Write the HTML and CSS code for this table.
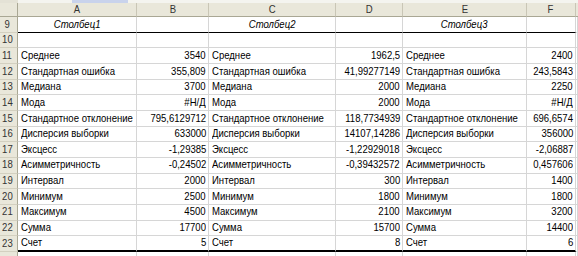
FILE: index.html
```html
<!DOCTYPE html>
<html lang="ru">
<head>
<meta charset="utf-8">
<link rel="stylesheet" href="styles.css">
</head>
<body>
<div class="sheet">
  <div class="strip"></div>

  <div class="corner"></div>
  <div class="ch"><span>A</span></div>
  <div class="ch"><span>B</span></div>
  <div class="ch"><span>C</span></div>
  <div class="ch"><span>D</span></div>
  <div class="ch"><span>E</span></div>
  <div class="ch"><span>F</span></div>
  <div class="ch ch-last"></div>

  <div class="rh"><span>9</span></div>
  <div class="c head it"><span>Столбец1</span></div>
  <div class="c head"></div>
  <div class="c head it"><span>Столбец2</span></div>
  <div class="c head"></div>
  <div class="c head it"><span>Столбец3</span></div>
  <div class="c head"></div>
  <div class="c"></div>

  <div class="rh"><span>10</span></div>
  <div class="c"></div><div class="c"></div><div class="c"></div><div class="c"></div><div class="c"></div><div class="c"></div><div class="c"></div>

  <div class="rh"><span>11</span></div>
  <div class="c t"><span>Среднее</span></div><div class="c n"><span>3540</span></div>
  <div class="c t"><span>Среднее</span></div><div class="c n"><span>1962,5</span></div>
  <div class="c t"><span>Среднее</span></div><div class="c n"><span>2400</span></div>
  <div class="c"></div>

  <div class="rh"><span>12</span></div>
  <div class="c t"><span>Стандартная ошибка</span></div><div class="c n"><span>355,809</span></div>
  <div class="c t"><span>Стандартная ошибка</span></div><div class="c n"><span>41,99277149</span></div>
  <div class="c t"><span>Стандартная ошибка</span></div><div class="c n"><span>243,5843</span></div>
  <div class="c"></div>

  <div class="rh"><span>13</span></div>
  <div class="c t"><span>Медиана</span></div><div class="c n"><span>3700</span></div>
  <div class="c t"><span>Медиана</span></div><div class="c n"><span>2000</span></div>
  <div class="c t"><span>Медиана</span></div><div class="c n"><span>2250</span></div>
  <div class="c"></div>

  <div class="rh"><span>14</span></div>
  <div class="c t"><span>Мода</span></div><div class="c n"><span>#Н/Д</span></div>
  <div class="c t"><span>Мода</span></div><div class="c n"><span>2000</span></div>
  <div class="c t"><span>Мода</span></div><div class="c n"><span>#Н/Д</span></div>
  <div class="c"></div>

  <div class="rh"><span>15</span></div>
  <div class="c t"><span>Стандартное отклонение</span></div><div class="c n"><span>795,6129712</span></div>
  <div class="c t"><span>Стандартное отклонение</span></div><div class="c n"><span>118,7734939</span></div>
  <div class="c t"><span>Стандартное отклонение</span></div><div class="c n"><span>696,6574</span></div>
  <div class="c"></div>

  <div class="rh"><span>16</span></div>
  <div class="c t"><span>Дисперсия выборки</span></div><div class="c n"><span>633000</span></div>
  <div class="c t"><span>Дисперсия выборки</span></div><div class="c n"><span>14107,14286</span></div>
  <div class="c t"><span>Дисперсия выборки</span></div><div class="c n"><span>356000</span></div>
  <div class="c"></div>

  <div class="rh"><span>17</span></div>
  <div class="c t"><span>Эксцесс</span></div><div class="c n"><span>-1,29385</span></div>
  <div class="c t"><span>Эксцесс</span></div><div class="c n"><span>-1,22929018</span></div>
  <div class="c t"><span>Эксцесс</span></div><div class="c n"><span>-2,06887</span></div>
  <div class="c"></div>

  <div class="rh"><span>18</span></div>
  <div class="c t"><span>Асимметричность</span></div><div class="c n"><span>-0,24502</span></div>
  <div class="c t"><span>Асимметричность</span></div><div class="c n"><span>-0,39432572</span></div>
  <div class="c t"><span>Асимметричность</span></div><div class="c n"><span>0,457606</span></div>
  <div class="c"></div>

  <div class="rh"><span>19</span></div>
  <div class="c t"><span>Интервал</span></div><div class="c n"><span>2000</span></div>
  <div class="c t"><span>Интервал</span></div><div class="c n"><span>300</span></div>
  <div class="c t"><span>Интервал</span></div><div class="c n"><span>1400</span></div>
  <div class="c"></div>

  <div class="rh"><span>20</span></div>
  <div class="c t"><span>Минимум</span></div><div class="c n"><span>2500</span></div>
  <div class="c t"><span>Минимум</span></div><div class="c n"><span>1800</span></div>
  <div class="c t"><span>Минимум</span></div><div class="c n"><span>1800</span></div>
  <div class="c"></div>

  <div class="rh"><span>21</span></div>
  <div class="c t"><span>Максимум</span></div><div class="c n"><span>4500</span></div>
  <div class="c t"><span>Максимум</span></div><div class="c n"><span>2100</span></div>
  <div class="c t"><span>Максимум</span></div><div class="c n"><span>3200</span></div>
  <div class="c"></div>

  <div class="rh"><span>22</span></div>
  <div class="c t"><span>Сумма</span></div><div class="c n"><span>17700</span></div>
  <div class="c t"><span>Сумма</span></div><div class="c n"><span>15700</span></div>
  <div class="c t"><span>Сумма</span></div><div class="c n"><span>14400</span></div>
  <div class="c"></div>

  <div class="rh"><span>23</span></div>
  <div class="c t foot"><span>Счет</span></div><div class="c n foot"><span>5</span></div>
  <div class="c t foot"><span>Счет</span></div><div class="c n foot"><span>8</span></div>
  <div class="c t foot"><span>Счет</span></div><div class="c n foot"><span>6</span></div>
  <div class="c"></div>

  <div class="rh"></div>
  <div class="c"></div><div class="c"></div><div class="c"></div><div class="c"></div><div class="c"></div><div class="c"></div><div class="c"></div>
</div>
</body>
</html>
```

FILE: styles.css
```css
html, body {
  margin: 0;
  padding: 0;
  background: #ffffff;
  overflow: hidden;
}

.sheet {
  width: 578px;
  height: 256px;
  overflow: hidden;
  display: grid;
  grid-template-columns: 18px 119px 72px 127px 67px 124px 49px 1fr;
  grid-template-rows: 3px 14px repeat(16, 15.67px);
  font-family: "Liberation Sans", Arial, sans-serif;
  font-size: 11.5px;
  color: #000;
}

.sheet > div {
  box-sizing: border-box;
  overflow: hidden;
  white-space: nowrap;
  display: flex;
  align-items: center;
}

.sheet > div > span {
  display: inline-block;
  transform: scaleX(0.83);
  line-height: 1;
}

.strip {
  grid-column: 1 / -1;
  background: linear-gradient(to right, #e4e2d6 0, #e4e2d6 18px, #f4f4ef 18px, #f4f4ef 72px, #c9d3ec 72px, #c9d3ec 128px, #f4f4ef 128px);
}

.corner,
.ch {
  background: #e9e7da;
  border-right: 1px solid #c9c6b6;
  border-bottom: 1px solid #a9a794;
}

.corner {
  border-right-color: #a9a794;
}

.ch {
  justify-content: center;
  color: #333;
}

.ch > span {
  transform-origin: center;
}

.ch-last {
  border-right: none;
}

.rh {
  background: #e9e7da;
  border-right: 1px solid #a9a794;
  border-bottom: 1px solid #d3d0c0;
  justify-content: center;
  padding-right: 3px;
  color: #333;
}

.rh > span {
  transform-origin: center;
}

.c {
  background: #fff;
  border-right: 1px solid #d6d6d6;
  border-bottom: 1px solid #d6d6d6;
}

.t {
  padding-left: 3px;
}

.t > span {
  transform-origin: left center;
}

.n {
  justify-content: flex-end;
  padding-right: 2px;
}

.n > span {
  transform-origin: right center;
}

.head {
  border-bottom: 1px solid #000;
  justify-content: center;
}

.it {
  font-style: italic;
}

.it > span {
  transform-origin: center;
}

.foot {
  border-bottom: 2px solid #000;
}
```
